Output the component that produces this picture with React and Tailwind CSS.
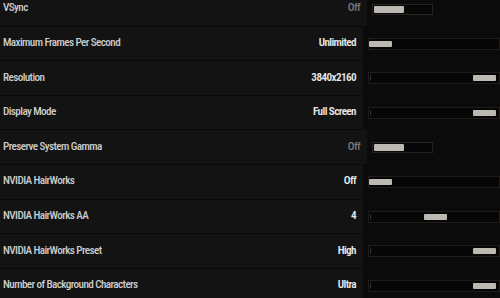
const rows = [
  { label: 'VSync', value: 'Off', dim: true, short: true, pos: 0 },
  { label: 'Maximum Frames Per Second', value: 'Unlimited', pos: 0 },
  { label: 'Resolution', value: '3840x2160', pos: 1 },
  { label: 'Display Mode', value: 'Full Screen', pos: 1 },
  { label: 'Preserve System Gamma', value: 'Off', dim: true, short: true, pos: 0 },
  { label: 'NVIDIA HairWorks', value: 'Off', pos: 0 },
  { label: 'NVIDIA HairWorks AA', value: '4', pos: 0.53 },
  { label: 'NVIDIA HairWorks Preset', value: 'High', pos: 1 },
  { label: 'Number of Background Characters', value: 'Ultra', pos: 1 },
];

function Slider({ short, pos }) {
  if (short) {
    return (
      <div className="relative h-[11px] w-[61px] border border-[#26231f] bg-[#070707]">
        <div className="absolute left-[1px] top-[1px] h-[7px] w-[30px] rounded-[1px] bg-[#bcb8b2]" />
      </div>
    );
  }
  return (
    <div className="relative h-[12px] w-[132px] border border-[#1f1c19] bg-[#060606]">
      <span className="absolute left-[1px] top-[2px] h-[6px] w-[2px] rounded-l-full border-l border-[#3a3632]" />
      <div
        className="absolute top-[2px] h-[6px] w-[23px] rounded-[1px] bg-[#bcb8b2]"
        style={{ left: `${pos * 104}px` }}
      />
    </div>
  );
}

export default function App() {
  return (
    <div
      className="h-[298px] w-[500px] overflow-hidden bg-[#0b0b0b]"
      style={{ fontFamily: '"Roboto Condensed", "Open Sans", sans-serif', fontStretch: '75%' }}
    >
      <div className="-mt-[8px] flex flex-col">
        {rows.map((r) => (
          <div key={r.label} className="flex h-[34.6px] items-center">
            <div className="flex h-full w-[367px] items-center justify-between border-b border-[#0a0a0a] bg-[#131313] pl-[3px] pr-[7px] text-[11.2px] tracking-[-0.6px]">
              <span className="font-medium text-[#cdcdcd]">{r.label}</span>
              <span className={r.dim ? 'font-medium text-[#7c7c7c]' : 'font-semibold text-[#e8e8e8]'}>{r.value}</span>
            </div>
            <div className="flex h-full flex-1 items-center pl-[5px]">
              <Slider short={r.short} pos={r.pos} />
            </div>
          </div>
        ))}
      </div>
    </div>
  );
}
